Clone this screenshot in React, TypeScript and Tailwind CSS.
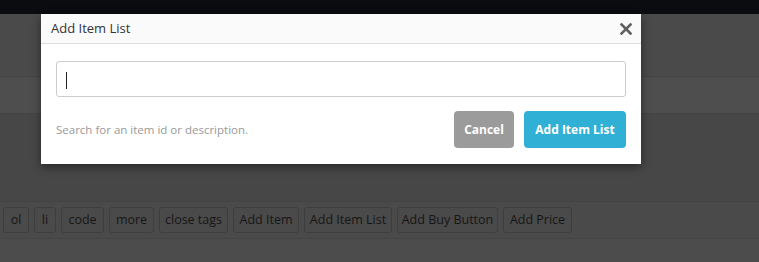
import React from 'react';

// Quicktag buttons along the editor toolbar (widths taken from the screenshot)
const quickTags = [
    { label: 'ol', w: 'w-[26px]' },
    { label: 'li', w: 'w-[22px]' },
    { label: 'code', w: 'w-[43px]' },
    { label: 'more', w: 'w-[45px]' },
    { label: 'close tags', w: 'w-[69px]' },
    { label: 'Add Item', w: 'w-[66px]' },
    { label: 'Add Item List', w: 'w-[88px]' },
    { label: 'Add Buy Button', w: 'w-[101px]' },
    { label: 'Add Price', w: 'w-[69px]' },
];

function CloseIcon() {
    return (
        <svg width="12" height="12" viewBox="0 0 12 12" className="block">
            <path d="M1.5 1.5 L10.5 10.5 M10.5 1.5 L1.5 10.5" stroke="#5f5f5f" strokeWidth="2.6" strokeLinecap="square" />
        </svg>
    );
}

export default function App() {
    return (
        <div className="relative w-[759px] h-[262px] overflow-hidden bg-[#4c4c4c] font-['Open_Sans',sans-serif]">
            {/* Dimmed page behind the modal */}
            <div className="h-[14px] bg-[#0b0c10]" />
            <div className="h-[63px] bg-[#4a4a4a] border-b border-[#434343]" />
            <div className="h-[37px] bg-[#4e4e4e] border-b border-[#444444]" />
            <div className="h-[88px] bg-[#474747] border-b border-[#434343]" />
            <div className="h-[37px] bg-[#4a4a4a] border-b border-[#444444] flex items-center gap-[5px] pl-[3px]">
                {quickTags.map((tag) => (
                    <div
                        key={tag.label}
                        className={`${tag.w} h-[26px] flex items-center justify-center rounded-[3px] border border-[#3e3e3e] bg-[#4a4a4a] text-[12.5px] text-[#161616] whitespace-nowrap`}
                    >
                        {tag.label}
                    </div>
                ))}
            </div>

            {/* Modal */}
            <div className="absolute left-[41px] top-[14px] w-[600px] h-[150px] bg-white shadow-[0_3px_9px_rgba(0,0,0,0.45)] flex flex-col">
                <div className="h-[30px] bg-[#fafafa] border-b border-[#dddddd] flex items-center justify-between pl-[10px] pr-[9px]">
                    <span className="text-[13px] text-[#333333]">Add Item List</span>
                    <CloseIcon />
                </div>
                <div className="px-[15px] pt-[17px]">
                    <div className="relative h-[36px] rounded-[3px] border border-[#cccccc] bg-white">
                        <span className="absolute left-[9px] top-[10px] w-px h-[17px] bg-[#222222]" />
                    </div>
                    <div className="mt-[14px] flex items-center justify-between">
                        <span className="text-[11.5px] text-[#999999]">Search for an item id or description.</span>
                        <div className="flex gap-[10px]">
                            <button className="w-[60px] h-[37px] rounded-[4px] bg-[#9b9b9b] text-white text-[12px] font-bold">
                                Cancel
                            </button>
                            <button className="w-[102px] h-[37px] rounded-[4px] bg-[#31b0d5] text-white text-[12px] font-bold">
                                Add Item List
                            </button>
                        </div>
                    </div>
                </div>
            </div>
        </div>
    );
}
